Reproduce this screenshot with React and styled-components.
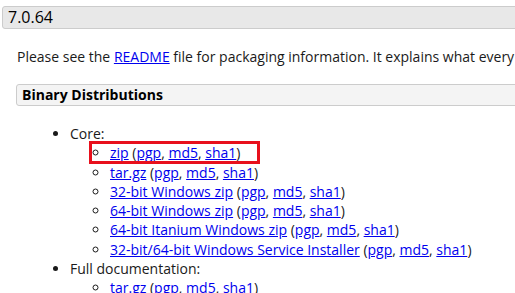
import React from 'react';
import styled, { createGlobalStyle } from 'styled-components';

const GlobalStyle = createGlobalStyle`
  html, body {
    margin: 0;
    padding: 0;
    background: #fff;
    overflow: hidden;
  }
  body {
    font-family: "Open Sans", "DejaVu Sans", sans-serif;
    font-size: 14px;
    color: #1a1a1a;
  }
`;

const Page = styled.div`
  width: 900px;
  padding: 6px 0 0 2px;
`;

const VersionHeader = styled.h3`
  margin: 0;
  height: 21px;
  line-height: 21px;
  padding: 0 5px;
  font-size: 16px;
  font-weight: normal;
  color: #000;
  background: #e8e8e8;
  border: 1px solid #ccc;
  border-radius: 3px;
`;

const Body = styled.div`
  padding-left: 14px;
`;

const Intro = styled.p`
  margin: 18px 0 0 1px;
  line-height: 19px;
  white-space: nowrap;
`;

const SubHeader = styled.h4`
  margin: 18px 0 0;
  height: 20px;
  line-height: 20px;
  padding: 0 5px;
  font-size: 14px;
  font-weight: bold;
  color: #000;
  background: #f4f4f4;
  border: 1px solid #ccc;
  border-radius: 3px;
`;

const List = styled.ul`
  margin: ${({ $nested }) => ($nested ? '0' : '18px 0 0')};
  padding-left: ${({ $nested }) => ($nested ? '40px' : '54px')};
  list-style-type: ${({ $nested }) => ($nested ? 'circle' : 'disc')};
  line-height: 19.3px;
`;

const Item = styled.li`
  position: relative;
  white-space: nowrap;
`;

const Link = styled.a`
  color: #00e;
  text-decoration: underline;
`;

const Highlight = styled.span`
  position: absolute;
  left: -21px;
  top: -2px;
  width: 165px;
  height: 17px;
  border: 3px solid #e8101c;
  pointer-events: none;
`;

const Download = ({ name, highlight }) => (
  <Item>
    {highlight && <Highlight />}
    <Link href="#">{name}</Link> (<Link href="#">pgp</Link>, <Link href="#">md5</Link>,{' '}
    <Link href="#">sha1</Link>)
  </Item>
);

const core = [
  'zip',
  'tar.gz',
  '32-bit Windows zip',
  '64-bit Windows zip',
  '64-bit Itanium Windows zip',
  '32-bit/64-bit Windows Service Installer',
];

export default function App() {
  return (
    <>
      <GlobalStyle />
      <Page>
        <VersionHeader>7.0.64</VersionHeader>
        <Body>
          <Intro>
            Please see the <Link href="#">README</Link> file for packaging information. It explains what every
            distribution contains.
          </Intro>
          <SubHeader>Binary Distributions</SubHeader>
          <List>
            <Item>
              Core:
              <List $nested>
                {core.map((name, i) => (
                  <Download key={name} name={name} highlight={i === 0} />
                ))}
              </List>
            </Item>
            <Item>
              Full documentation:
              <List $nested>
                <Download name="tar.gz" />
              </List>
            </Item>
          </List>
        </Body>
      </Page>
    </>
  );
}
